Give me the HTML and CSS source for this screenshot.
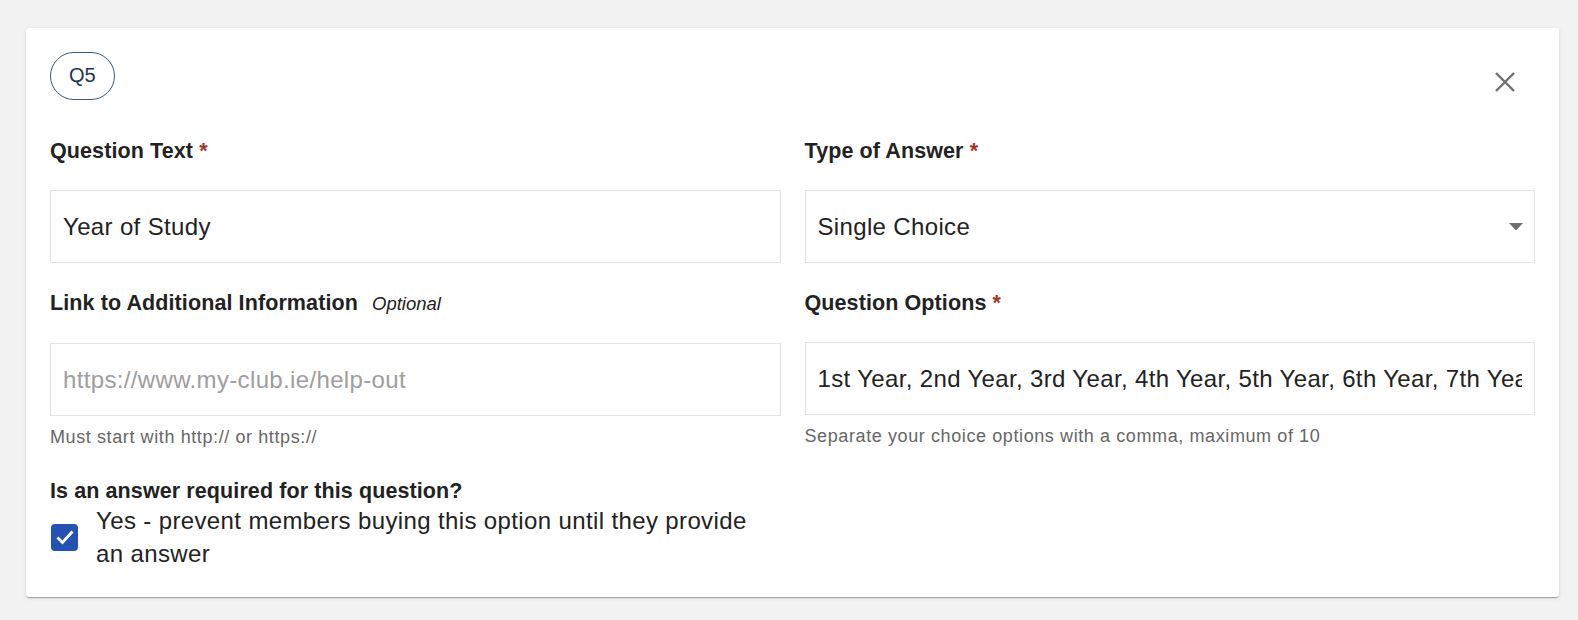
FILE: index.html
```html
<!DOCTYPE html>
<html lang="en">
<head>
  <meta charset="UTF-8" />
  <meta name="viewport" content="width=device-width, initial-scale=1" />
  <title>Question Editor</title>
  <link rel="stylesheet" href="styles.css">
</head>
<body>
  <div class="card">
    <div class="card-header">
      <span class="q-pill">Q5</span>
      <button class="close-btn" aria-label="Remove question">
        <svg width="20" height="20" viewBox="0 0 20 20">
          <path d="M1 1 L19 19 M19 1 L1 19" stroke="#6f6f6f" stroke-width="2.4" fill="none" />
        </svg>
      </button>
    </div>

    <div class="form-grid">
      <div class="field">
        <label for="q-text">Question Text <span class="req">*</span></label>
        <input id="q-text" class="text-input" type="text" value="Year of Study">
      </div>

      <div class="field">
        <label for="q-type">Type of Answer <span class="req">*</span></label>
        <div class="select-wrap">
          <select id="q-type" class="text-input">
            <option selected>Single Choice</option>
            <option>Multiple Choice</option>
            <option>Free Text</option>
          </select>
          <svg class="select-arrow" width="14" height="8" viewBox="0 0 14 8">
            <path d="M0 0 L14 0 L7 7.5 Z" fill="#6f6f6f" />
          </svg>
        </div>
      </div>

      <div class="field">
        <label for="q-link">Link to Additional Information <em class="optional">Optional</em></label>
        <input id="q-link" class="text-input" type="text" placeholder="https://www.my-club.ie/help-out">
        <div class="helper">Must start with http:// or https://</div>
      </div>

      <div class="field">
        <label for="q-options">Question Options <span class="req">*</span></label>
        <input id="q-options" class="text-input" type="text" value="1st Year, 2nd Year, 3rd Year, 4th Year, 5th Year, 6th Year, 7th Year, Postgraduate">
        <div class="helper">Separate your choice options with a comma, maximum of 10</div>
      </div>
    </div>

    <div class="required-block">
      <div class="field-label">Is an answer required for this question?</div>
      <label class="check-row">
        <span class="check-box">
          <svg width="18" height="15" viewBox="0 0 18 15">
            <path d="M1.5 7.5 L6.5 12.5 L16.5 1.5" stroke="#fff" stroke-width="2.8" fill="none" />
          </svg>
        </span>
        <span class="check-text">Yes - prevent members buying this option until they provide an answer</span>
      </label>
    </div>
  </div>
</body>
</html>
```

FILE: styles.css
```css
body {
  font-family: "Liberation Sans", Arial, sans-serif;
  background-color: #f2f2f2;
  margin: 0;
  padding: 28px 19px 23px 26px;
}
.card {
  background-color: #fff;
  border-radius: 3px;
  padding: 24px 24px 27px;
  box-shadow: 0 2px 1px -1px rgba(0,0,0,0.2), 0 1px 1px rgba(0,0,0,0.14), 0 1px 4px rgba(0,0,0,0.1);
}
.card-header {
  display: flex;
  justify-content: space-between;
  align-items: flex-start;
  margin-bottom: 36px;
}
.q-pill {
  display: inline-block;
  padding: 11px 18px 12px;
  border: 1px solid #3e5a73;
  border-radius: 24px;
  font-size: 20px;
  line-height: 23px;
  color: #1b3550;
}
.close-btn {
  width: 40px;
  height: 40px;
  margin: 10px 10px 0 0;
  padding: 10px;
  border: none;
  background: none;
  cursor: pointer;
}
.close-btn svg {
  display: block;
}
.form-grid {
  display: grid;
  grid-template-columns: 1fr 1fr;
  column-gap: 24px;
  row-gap: 27px;
}
.field {
  display: flex;
  flex-direction: column;
}
.field label,
.field-label {
  font-size: 21.5px;
  font-weight: bold;
  line-height: 26px;
  letter-spacing: 0.1px;
  color: #222;
}
.field label {
  margin-bottom: 26px;
}
.req {
  color: #a8321f;
  font-weight: bold;
}
.optional {
  font-weight: normal;
  font-size: 18.5px;
  letter-spacing: 0;
  margin-left: 8px;
  color: #222;
}
.text-input {
  box-sizing: border-box;
  width: 100%;
  height: 73px;
  padding: 0 12px;
  border: 1px solid #e2e2e2;
  border-radius: 0;
  background-color: #fff;
  font-family: "Liberation Sans", Arial, sans-serif;
  font-size: 24px;
  letter-spacing: 0.35px;
  color: #222;
  outline: none;
}
.text-input::placeholder {
  color: #9e9e9e;
}
.select-wrap {
  position: relative;
}
.select-wrap select {
  appearance: none;
  -webkit-appearance: none;
}
.select-arrow {
  position: absolute;
  right: 12px;
  top: 33px;
  pointer-events: none;
}
.helper {
  margin-top: 9px;
  font-size: 18px;
  line-height: 24px;
  letter-spacing: 0.6px;
  color: #666;
}
.required-block {
  margin-top: 29px;
}
.check-row {
  display: flex;
  align-items: center;
  gap: 18px;
  margin-left: 1px;
  cursor: pointer;
}
.check-box {
  flex: none;
  width: 27px;
  height: 27px;
  border-radius: 4px;
  background-color: #2452b3;
  display: flex;
  align-items: center;
  justify-content: center;
}
.check-text {
  max-width: 660px;
  font-size: 24px;
  line-height: 33px;
  letter-spacing: 0.37px;
  color: #222;
}
```
